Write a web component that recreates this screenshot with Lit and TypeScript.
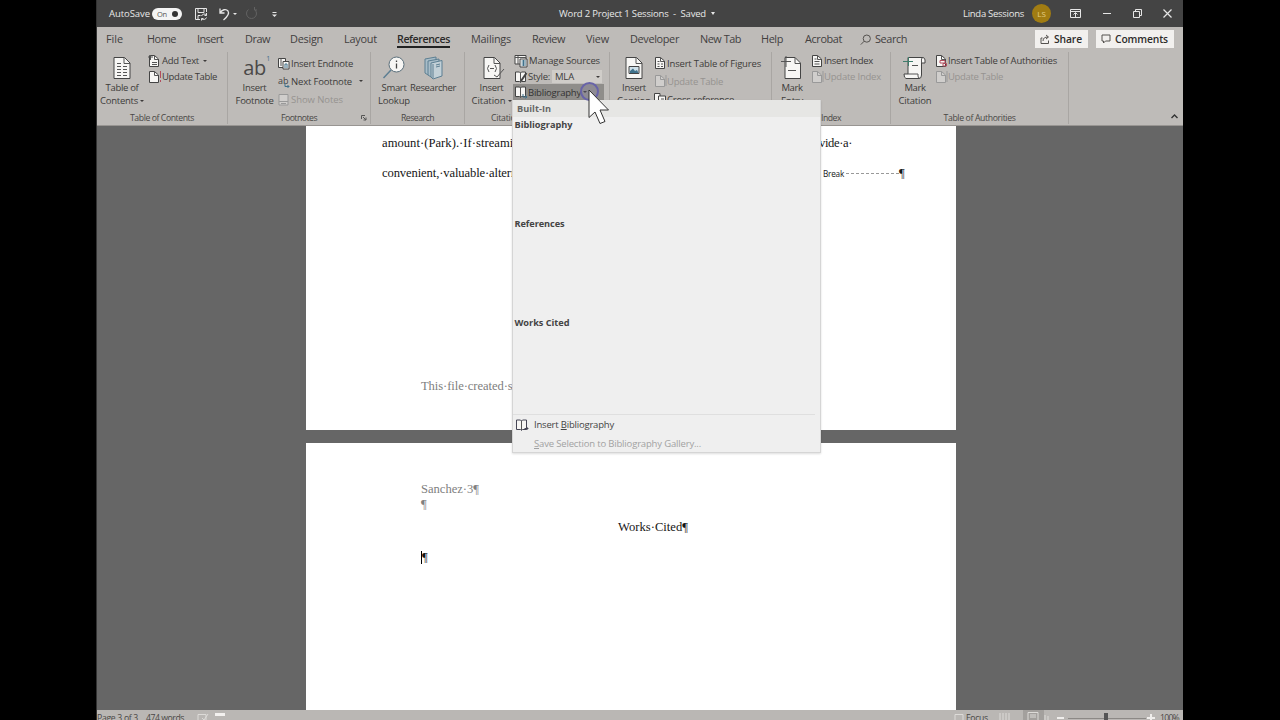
import { LitElement, html, svg, css } from "lit";
import { customElement, property } from "lit/decorators.js";

/** A one-line label whose tracking is adjusted so that it fills a given width. */
@customElement("fit-label")
class FitLabel extends LitElement {
  static styles = css`
    :host { display: inline-block; white-space: pre; flex: none; }
    u { text-underline-offset: 1px; text-decoration-thickness: 1px; }
  `;
  @property({ type: Number }) w = 0;
  @property() text = "";
  /** Index of the access-key letter, or -1 for none. */
  @property({ type: Number }) key = -1;
  render() {
    const t = this.text, k = this.key;
    return k < 0
      ? html`<span>${t}</span>`
      : html`<span>${t.slice(0, k)}<u>${t[k]}</u>${t.slice(k + 1)}</span>`;
  }
  updated() {
    const el = this.renderRoot.querySelector("span") as HTMLElement;
    el.style.letterSpacing = "0px";
    const natural = el.getBoundingClientRect().width;
    if (natural && this.w) {
      el.style.letterSpacing = (this.w - natural) / this.text.length + "px";
      this.style.width = this.w + "px";
    }
  }
}

const L = (text: string, w: number, cls = "", key = -1) =>
  html`<fit-label class=${cls} .text=${text} .w=${w} .key=${key}></fit-label>`;

const icon = (w: number, h: number, body: unknown, cls = "") =>
  html`<svg class="ic ${cls}" width=${w} height=${h} viewBox="0 0 ${w} ${h}">${body}</svg>`;

const bigPage = (extra: unknown) =>
  icon(26, 26, svg`<path class="pg" d="M5 2.5H15.5L21 8V23.5H5Z"/><path class="ln" d="M15 2.5V8.5H21"/>${extra}`);
const smallPage = (extra: unknown, cls = "") =>
  icon(13, 14, svg`<path class="pg" d="M1.5 1.5H6.500L10.500 5V12.5H1.500Z"/><path class="ln" d="M6.500 1.5V5.5H10.500"/>${extra}`, cls);
const book = (extra: unknown) =>
  icon(14, 14, svg`<path class="pg" d="M1.5 2H5.5L6.5 3L7.5 2H11.5V11.5H7.5L6.5 12.5L5.5 11.5H1.5Z"/><path class="ln" d="M6.5 3V12"/>${extra}`);
const caret = html`<i class="caret"></i>`;

const TABS: [string, number][] = [
  ["File", 17], ["Home", 29], ["Insert", 26], ["Draw", 25], ["Design", 33], ["Layout", 33],
  ["References", 53], ["Mailings", 40], ["Review", 33], ["View", 23], ["Developer", 49],
  ["New Tab", 41], ["Help", 22], ["Acrobat", 37],
];

@customElement("app-root")
class AppRoot extends LitElement {
  static styles = css`
    :host { display: block; width: 1280px; height: 720px; overflow: hidden; background: #000;
      font-family: "Open Sans", "Noto Sans", sans-serif; color: #3d3b3a; font-size: 9.5px; }
    * { box-sizing: border-box; }
    .ic { display: block; flex: none; fill: none; stroke-width: 1; overflow: visible; }
    .pg { fill: #f7f6f4; stroke: #444; }
    .ln { fill: none; stroke: #555; }
    .blue { fill: none; stroke: #3f718b; }
    .red { fill: none; stroke: #b24c5c; }
    .window { position: relative; width: 1087px; height: 720px; margin-left: 96px; display: flex;
      flex-direction: column; overflow: hidden; background: #666; border-left: 1px solid #333; }
    .row { display: flex; align-items: center; }
    .caret { width: 0; height: 0; border: 2px solid transparent; border-top: 2.5px solid currentColor;
      border-bottom: 0; flex: none; display: inline-block; }

    .title { height: 27px; flex: none; background: #444; color: #e8e8e8; display: grid; align-items: center;
      grid-template-columns: 12px 41px 2px 31px 11px 15px 9px 21px 6px 14px 12px 288px 152px 8px 244px 61px 8px 19px 19px 11px 22px 9px 21px 10px 20px 9px 1fr; }
    .switch { width: 30px; height: 12px; background: #f4f4f4; border-radius: 6px; color: #555;
      display: flex; align-items: center; justify-content: space-between; padding: 0 4px 0 5px; font-size: 7.5px; }
    .knob { width: 6px; height: 6px; border-radius: 50%; background: #333; }
    .title .ic { stroke: #e6e6e6; }
    .title .dim { stroke: #626262; }
    .title .saved { border-width: 2.5px; border-top-width: 3.5px; border-bottom: 0; }
    .avatar { width: 19px; height: 19px; border-radius: 50%; background: #a17c12; color: #e5cf86;
      display: flex; align-items: center; justify-content: center; font-size: 8px; }

    .tabs { height: 25px; flex: none; background: #bebbb8; display: grid; align-items: center; font-size: 10.9px;
      padding-left: 9px; color: #42403f;
      grid-template-columns: 41px 50px 48px 45px 54px 53px 74px 61px 54px 44px 70px 61px 44px 55px 15px 160px 61px 1fr; }
    .tab { position: relative; height: 25px; display: flex; align-items: center; padding-bottom: 2px; }
    .active { font-weight: 600; color: #2b2a29; font-size: 10.6px; }
    .active::after { content: ""; position: absolute; left: 0; width: 53px; bottom: 4px; height: 2px; background: #222; }
    .tabs .ic { stroke: #55524f; }
    .action { height: 18px; background: #f2f0ee; color: #2c2b2a; font-weight: 600; font-size: 10.3px;
      display: flex; align-items: center; gap: 4px; padding-left: 5px; margin-top: -1px; }
    .share { width: 53px; }
    .comments { width: 78px; }

    .ribbon { height: 74px; flex: none; background: #bebbb8; border-bottom: 1px solid #989592; display: grid;
      grid-template-columns: 131px 143px 94px 145px 162px 119px 178px 1fr; }
    .group { display: grid; grid-template-rows: 59px 13px; border-right: 1px solid #a9a6a3; min-width: 0; height: 72px; }
    .group:last-child { border: 0; }
    .gbody { display: flex; min-width: 0; }
    .glabel { font-size: 8.7px; display: flex; align-items: center; justify-content: center; color: #4a4846; position: relative; padding-top: 1px; }
    .launch { position: absolute; right: 3px; top: 4px; }
    .big { display: flex; flex-direction: column; align-items: center; flex: none; line-height: 12.5px; padding-top: 3px; }
    .big .ic { margin-bottom: 1px; }
    .big .row { gap: 2px; }
    .w50 { width: 50px; margin-right: 1px; } .w54 { width: 53px; margin-right: -3px; } .w51 { width: 53px; margin-right: -4px; }
    .w44 { width: 46px; } .w46 { width: 46px; margin-left: -7px; }
    .w42 { width: 40px; margin-right: -1px; } .w48 { width: 48px; margin-right: -4px; }
    .list { display: flex; flex-direction: column; flex: none; }
    .list .row { gap: 0; }
    .list .wide { gap: 1px; }
    .tight { padding-top: 1px; }
    .tight .row { height: 15.7px; }
    .loose { padding-top: 2px; }
    .loose .row { height: 18px; }
    .off { color: #969390; }
    .off .pg { stroke: #999; fill: #d0cecc; }
    .off .ln { stroke: #999; }
    .ab { font-size: 20px; line-height: 26px; height: 27px; color: #4b4948; position: relative; letter-spacing: -.5px; }
    .ab sup { position: absolute; font-size: 7px; line-height: 8px; right: -4px; top: 0; color: #3f718b; }
    .style { background: #d0cdc9; width: 50px; height: 13px; display: flex; align-items: center;
      justify-content: space-between; padding: 0 2px 0 3px; margin-left: 2px; }
    .hot { background: #8f8d8a; margin-left: -1px; padding-left: 1px; width: 91px; color: #333; }
    .collapse { display: flex; justify-content: flex-end; align-items: flex-end; padding: 0 5px 5px 0; }

    .doc { height: 584px; flex: none; background: #666; padding-left: 209px; display: flex; flex-direction: column; gap: 13px;
      font-family: "Liberation Serif", serif; font-size: 12.6px; color: #161616; }
    .page { width: 650px; background: #fff; flex: none; }
    .p1 { height: 304px; padding: 2px 0 0 76px; }
    .p2 { height: 267px; padding: 39px 0 0 115px; }
    .line { height: 30px; display: flex; align-items: center; }
    .cut { width: 131px; overflow: hidden; display: block; flex: none; }
    .gap { width: 306px; flex: none; }
    .break { font-family: "Open Sans", sans-serif; font-size: 8.2px; margin-left: 4px; }
    .dots { width: 53px; border-top: 1px dashed #999; margin: 1px 0 0 2px; }
    .foot { color: #808080; margin: 183px 0 0 39px; display: flex; height: 30px; align-items: center; }
    .head { color: #808080; line-height: 15px; }
    .wc { margin: 7px 0 0 197px; line-height: 16px; }
    .ins { margin-top: 14px; line-height: 16px; display: flex; align-items: center; }
    .ins i { height: 13px; width: 1px; background: #000; }

    .status { height: 10px; flex: none; background: #bab7b4; overflow: hidden; font-size: 8.7px; line-height: 12px; display: grid;
      grid-template-columns: 49px 50px 21px 737px 12px 37px 24px 18px 42px 74px 1fr; align-items: start; padding-top: 2px; color: #4a4846; }
    .status .ic { stroke: #dddbd8; }
    .status .thumb { fill: #555; stroke: none; }
    .status .track { stroke: #8c8986; }
    .status .lit { stroke: #f0eeec; stroke-width: 2; }
    .sel { background: #a3a09d; width: 21px; height: 10px; margin: -2px 0 0 -4px; padding: 2px 0 0 4px; }
    .zoomer { grid-column: 9 / 12; display: flex; gap: 2px; }

    .menu { position: absolute; left: 415px; top: 100px; width: 309px; height: 353px; background: #efefef;
      border: 1px solid #d5d5d5; border-top: 0; color: #444; display: flex; flex-direction: column;
      box-shadow: 0 1px 2px #0002; }
    .built { height: 17px; background: #e6e6e4; font-weight: 700; font-size: 9.2px; padding-left: 4px; display: flex; align-items: center; color: #666; flex: none; }
    .sect { height: 98.9px; font-weight: 700; font-size: 9.2px; padding-left: 1.5px; line-height: 16px; flex: none; }
    .rule { height: 1px; background: #dfdfdf; margin-right: 5px; flex: none; }
    .cmd { height: 19.2px; display: flex; align-items: center; padding: 1px 0 0 2px; gap: 5px; flex: none; }
    .cmd.gray { color: #a2a2a2; padding: 0 0 0 21px; }
    .cmd .pg { stroke: #454554; }
    .pointer { position: absolute; left: 480px; top: 80px; }
  `;

  render() {
    return html`<div class="window">
      ${this.titleBar()} ${this.tabRow()} ${this.ribbon()} ${this.document()} ${this.status()} ${this.menu()}
      <svg class="pointer" width="40" height="48" viewBox="0 0 40 48">
        <circle cx="12.5" cy="11.5" r="8.5" fill="#8d87b040" stroke="#6863a8" stroke-width="2" />
        <path d="M12 10V37.5L18 32L23 43.5L28 41.5L23 30H31.5Z" fill="#fff" stroke="#333" />
      </svg>
    </div>`;
  }

  titleBar() {
    return html`<div class="title">
      <span></span>${L("AutoSave", 41)}<span></span>
      <span class="switch">${L("On", 10)}<i class="knob"></i></span><span></span>
      ${icon(14, 14, svg`<path d="M1.5 1.5H12.5V5M1.5 1.5V12.5H6M4 1.5V5.5H10V1.5M4 12V8.5H6.5M7.5 9A3 3 0 0 1 12.5 8M12.5 6V8.5H10.5M12.5 10.5A3 3 0 0 1 8 12M7.5 13.5V11.5H9.5"/>`)}
      <span></span>
      <span class="row">${icon(13, 14, svg`<path d="M2 1.5V6H6.5M2 6C4 2.5 8 1.5 10 4C12 7 9 10 5.5 13" stroke-width="1.3"/>`)}&nbsp;${caret}</span>
      <span></span>
      ${icon(13, 14, svg`<path class="dim" d="M9.5 2.5A5 5 0 1 1 3.5 2.5M9.5 0V3H12"/>`)}
      <span></span>
      ${icon(7, 8, svg`<path d="M1.5 2.5H5.5"/><path fill="#e6e6e6" stroke="none" d="M1 4.5H6L3.5 7Z"/>`)}
      ${L("Word 2 Project 1 Sessions  -  Saved", 147)}
      <i class="caret saved"></i>
      <span></span>
      ${L("Linda Sessions", 61)}<span></span>
      <span class="avatar">LS</span><span></span>
      ${icon(11, 9, svg`<path d="M.5 .5H10.500V8.500H.5ZM.5 2.500H10.500M5.500 8V4M3.500 5.500L5.500 3.500L7.500 5.500"/>`)}<span></span>
      ${icon(8, 8, svg`<path d="M0 3.500H8"/>`)}<span></span>
      ${icon(9, 9, svg`<path d="M.5 2.500H6.500V8.500H.5ZM2.500 2.500V.5H8.500V6.500H6.500"/>`)}<span></span>
      ${icon(9, 9, svg`<path d="M.5 .5L8.500 8.500M8.500 .5L.5 8.500" stroke-width="1.200"/>`)}
    </div>`;
  }

  tabRow() {
    return html`<div class="tabs">
      ${TABS.map(([t, w]) => html`<span class="tab ${t === "References" ? "active" : ""}">${L(t, w)}</span>`)}
      ${icon(12, 12, svg`<circle cx="6.8" cy="4.6" r="3.6"/><path d="M4.2 7.2L.8 10.6"/>`)}
      <span class="tab">${L("Search", 32)}</span>
      <span class="action share">${icon(10, 10, svg`<path d="M2.5 4H1V9.5H8.5V6.5M3 7C3 4 5 3 8 3M6 1L8.5 3L6 5"/>`)}${L("Share", 28)}</span>
      <span class="action comments">${icon(10, 10, svg`<path d="M1 1H9V7H4.5L2.5 9V7H1Z"/>`)}${L("Comments", 53)}</span>
    </div>`;
  }

  ribbon() {
    return html`<div class="ribbon">
      <div class="group"><div class="gbody">
        <div class="big w50">${bigPage(svg`<path class="ln" d="M8 8.5H12M8 11.5H12M14 11.5H18M8 14.5H12M14 14.5H18M8 17.5H12M14 17.5H18M8 20.5H12M14 20.5H18"/>`)}${L("Table of", 33)}<span class="row">${L("Contents", 38)}${caret}</span></div>
        <div class="list tight">
          <div class="row wide">${smallPage(svg`<path class="ln" d="M0 3H5M2.5 1V6M4 8.5H9M4 10.5H9"/>`)}${L("Add Text", 37)}&nbsp;${caret}</div>
          <div class="row wide">${smallPage(svg`<path class="red" d="M12.5 1V8M12.5 10V12"/>`)}${L("Update Table", 55)}</div>
        </div></div>
        <div class="glabel">${L("Table of Contents", 64)}</div></div>

      <div class="group"><div class="gbody">
        <div class="big w54"><span class="ab">ab<sup>1</sup></span>${L("Insert", 24)}${L("Footnote", 38)}</div>
        <div class="list loose">
          <div class="row wide">${icon(12, 13, svg`<path class="pg" d="M.5 1.5H7.5V10.5H.5Z"/><path class="ln" d="M3 1.5V9"/><path class="pg" d="M5 4.5H11V12H5Z"/><path class="blue" d="M7 11V7H9V11"/>`)}${L("Insert Endnote", 62)}</div>
          <div class="row wide">${icon(12, 13, svg`<text x="0" y="9" font-size="9" fill="#444">ab</text><path class="blue" d="M7 8V11.5H11M9.5 10L11 11.5L9.5 13"/>`)}${L("Next Footnote", 61)}&nbsp;&nbsp;${caret}</div>
          <div class="row wide off">${icon(12, 13, svg`<path class="pg" d="M1 1.5H10V12H1Z"/><path class="ln" d="M1 8.5H10M3 10.5H8"/>`)}${L("Show Notes", 52)}</div>
        </div></div>
        <div class="glabel">${L("Footnotes", 36)}<span class="launch">${icon(6, 6, svg`<path class="ln" d="M.5 4V.5H4M2 2L5 5M5 2.5V5H2.5"/>`)}</span></div></div>

      <div class="group"><div class="gbody">
        <div class="big w44">${icon(26, 26, svg`<circle cx="15.500" cy="9.5" r="7.5" fill="#f7f6f4" stroke="#5b6f7b"/><path d="M10 15L2.500 23" stroke="#5c7e92" stroke-width="1.5"/><path d="M15.500 8.5V13.5M15.500 5.5V7" stroke="#444" stroke-width="1.3"/>`)}${L("Smart", 25)}${L("Lookup", 32)}</div>
        <div class="big w46">${icon(26, 26, svg`<g stroke="#5d7f92" fill="#a9bdc8"><path d="M5 4L16 2V18L8 20L5 18Z"/><path d="M8 6L19 4V20L11 22L8 20Z"/><path d="M11 8L22 5.500V21L13 24L11 22Z" fill="#c2d0d7"/><path d="M13 9V23M16 10L20 9M16 12L20 11" fill="none"/></g>`)}${L("Researcher", 46)}</div>
        </div><div class="glabel">${L("Research", 33)}</div></div>

      <div class="group"><div class="gbody">
        <div class="big w51">${bigPage(svg`<path class="ln" d="M10 10Q7 13.500 10 17M16 10Q19 13.500 16 17M11 13.500H15"/><path class="ln" d="M15 20L18 22L25 14"/>`)}${L("Insert", 24)}<span class="row">${L("Citation", 34)}${caret}</span></div>
        <div class="list tight">
          <div class="row wide">${icon(14, 14, svg`<path class="pg" d="M1 1.500H12V10H1Z"/><path class="ln" d="M1 3.500H12M4 2V10"/><path class="pg" d="M6 5H13V13H6Z"/><path class="blue" d="M7.500 7H12M7.500 9H12M7.500 11H12M9.500 6V12"/>`)}${L("Manage Sources", 71)}</div>
          <div class="row">${book(svg`<path d="M12.500 3L7 11" stroke="#444" stroke-width="2"/>`)}${L("Style:", 22)}<span class="style">${L("MLA", 19)}${caret}</span></div>
          <div class="row hot">${book(svg`<path class="blue" d="M9 9V12H13M11.500 10.500L13 12L11.500 13.500"/>`)}${L("Bibliography", 53)}&nbsp;${caret}</div>
        </div></div><div class="glabel">${L("Citations & Bibliography", 92)}</div></div>

      <div class="group"><div class="gbody">
        <div class="big w48">${bigPage(svg`<path d="M8 11.500H18V18.500H8Z" fill="#cfe0e9" stroke="#444"/><path d="M9 18V16L12 13.500L14 16L16 15L17.500 18Z" fill="#3f718b"/>`)}${L("Insert", 24)}${L("Caption", 34)}</div>
        <div class="list loose">
          <div class="row">${smallPage(svg`<path class="ln" d="M3.500 5.500H5.500M3.500 8H5.500M3.500 10.500H5.500M7 8H9M7 10.500H9"/>`)}${L("Insert Table of Figures", 94)}</div>
          <div class="row off">${smallPage(svg`<path class="ln" d="M12 1V12"/>`)}${L("Update Table", 56)}</div>
          <div class="row">${icon(13, 14, svg`<path class="pg" d="M.500 1.500H6V10H.500Z"/><path class="pg" d="M4.500 4H11.500V12H4.500Z"/><path class="ln" d="M7 7H10"/>`)}${L("Cross-reference", 67)}</div>
        </div></div><div class="glabel">${L("Captions", 34)}</div></div>

      <div class="group"><div class="gbody">
        <div class="big w42">${icon(26, 26, svg`<path class="pg" d="M6 2.500H16L21.500 8V23.500H6Z"/><path class="ln" d="M16 2.500V8.500H21.500M9 15.500H17M2 6.500H12M7 1V12"/>`)}${L("Mark", 21)}${L("Entry", 22)}</div>
        <div class="list tight">
          <div class="row">${smallPage(svg`<path class="ln" d="M3.500 5H5.500M3.500 7.500H8.500M3.500 10H8.500"/>`)}${L("Insert Index", 49)}</div>
          <div class="row off">${smallPage(svg`<path class="ln" d="M12 1V12"/>`)}${L("Update Index", 57)}</div>
        </div></div><div class="glabel">${L("Index", 20)}</div></div>

      <div class="group"><div class="gbody">
        <div class="big w48">${icon(26, 26, svg`<path class="pg" d="M6 2.500H21Q23 3 23 5V8H19.500V20Q19.500 23.500 17 23.500H4Q2 23 2 19H6Z"/><path class="ln" d="M19.500 8V4Q19.500 3 21 2.500M6 19H16V21Q16 23.500 18 23.500M10 10.500H16"/><path d="M1 6.500H11M6.500 2V11" stroke="#3f7d6c"/>`)}${L("Mark", 21)}${L("Citation", 33)}</div>
        <div class="list tight">
          <div class="row">${smallPage(svg`<path class="red" d="M5 6.500H10V9H5ZM8 9.500H11.500V12H8Z"/>`)}${L("Insert Table of Authorities", 109)}</div>
          <div class="row off">${smallPage(svg`<path class="ln" d="M12 1V12"/>`)}${L("Update Table", 55)}</div>
        </div></div><div class="glabel">${L("Table of Authorities", 72)}</div></div>

      <div class="group collapse">${icon(7, 5, svg`<path d="M.500 4L3.500 1L6.500 4" stroke="#333" stroke-width="1.400"/>`)}</div>
    </div>`;
  }

  document() {
    return html`<div class="doc">
      <div class="page p1">
        <div class="line"><span class="cut">${L("amount·(Park).·If·streaming", 144)}</span><span class="gap"></span>${L("vide·a·", 33)}</div>
        <div class="line"><span class="cut">${L("convenient,·valuable·alternative", 159)}</span><span class="gap"></span>${L("Break", 21, "break")}<i class="dots"></i>¶</div>
        <div class="foot">${L("This·file·created·specifically", 144)}</div>
      </div>
      <div class="page p2">
        <div class="head">${L("Sanchez·3¶", 58)}</div>
        <div class="head">¶</div>
        <div class="wc">${L("Works·Cited¶", 70)}</div>
        <div class="ins"><i></i>¶</div>
      </div>
    </div>`;
  }

  status() {
    return html`<div class="status">
      ${L("Page 3 of 3", 41)}${L("474 words", 38)}
      ${icon(13, 10, svg`<path d="M2 2.500H10V10M2 2.500V10M6 6L8 8L12 2"/>`)}
      ${icon(12, 10, svg`<path d="M-2 2.500H8" stroke="#f3f1ef" stroke-width="3"/>`)}
      ${icon(10, 10, svg`<path d="M1 2.500H9V10H1Z"/>`)}
      ${L("Focus", 22)}
      ${icon(12, 10, svg`<path d="M-3 1V10M0 1V10M3 1V10M6 1V10"/>`)}
      <span class="sel">${icon(12, 10, svg`<path d="M1 .500H11V10M1 .500V10M3 3H9M3 5H9"/>`)}</span>
      <span class="zoomer">${icon(113, 8, svg`<path d="M0 3V8M3 4V8"/><path class="lit" d="M12 6H19M102 6H110M106 2V8"/><path class="track" d="M23 6.500H101"/><path class="thumb" d="M59 1H63V8H59Z"/>`)}${L("100%", 19)}</span>
    </div>`;
  }

  menu() {
    return html`<div class="menu">
      <div class="built">${L("Built-In", 34)}</div>
      <div class="sect">${L("Bibliography", 58)}</div>
      <div class="sect">${L("References", 50)}</div>
      <div class="sect">${L("Works Cited", 55)}</div>
      <div class="rule"></div>
      <div class="cmd">${book(svg`<path d="M9.500 10.500H13M11.500 9L13 10.500L11.500 12" stroke="#454554"/>`)}${L("Insert Bibliography", 80, "", 7)}</div>
      <div class="cmd gray">${L("Save Selection to Bibliography Gallery...", 167, "", 0)}</div>
    </div>`;
  }
}
